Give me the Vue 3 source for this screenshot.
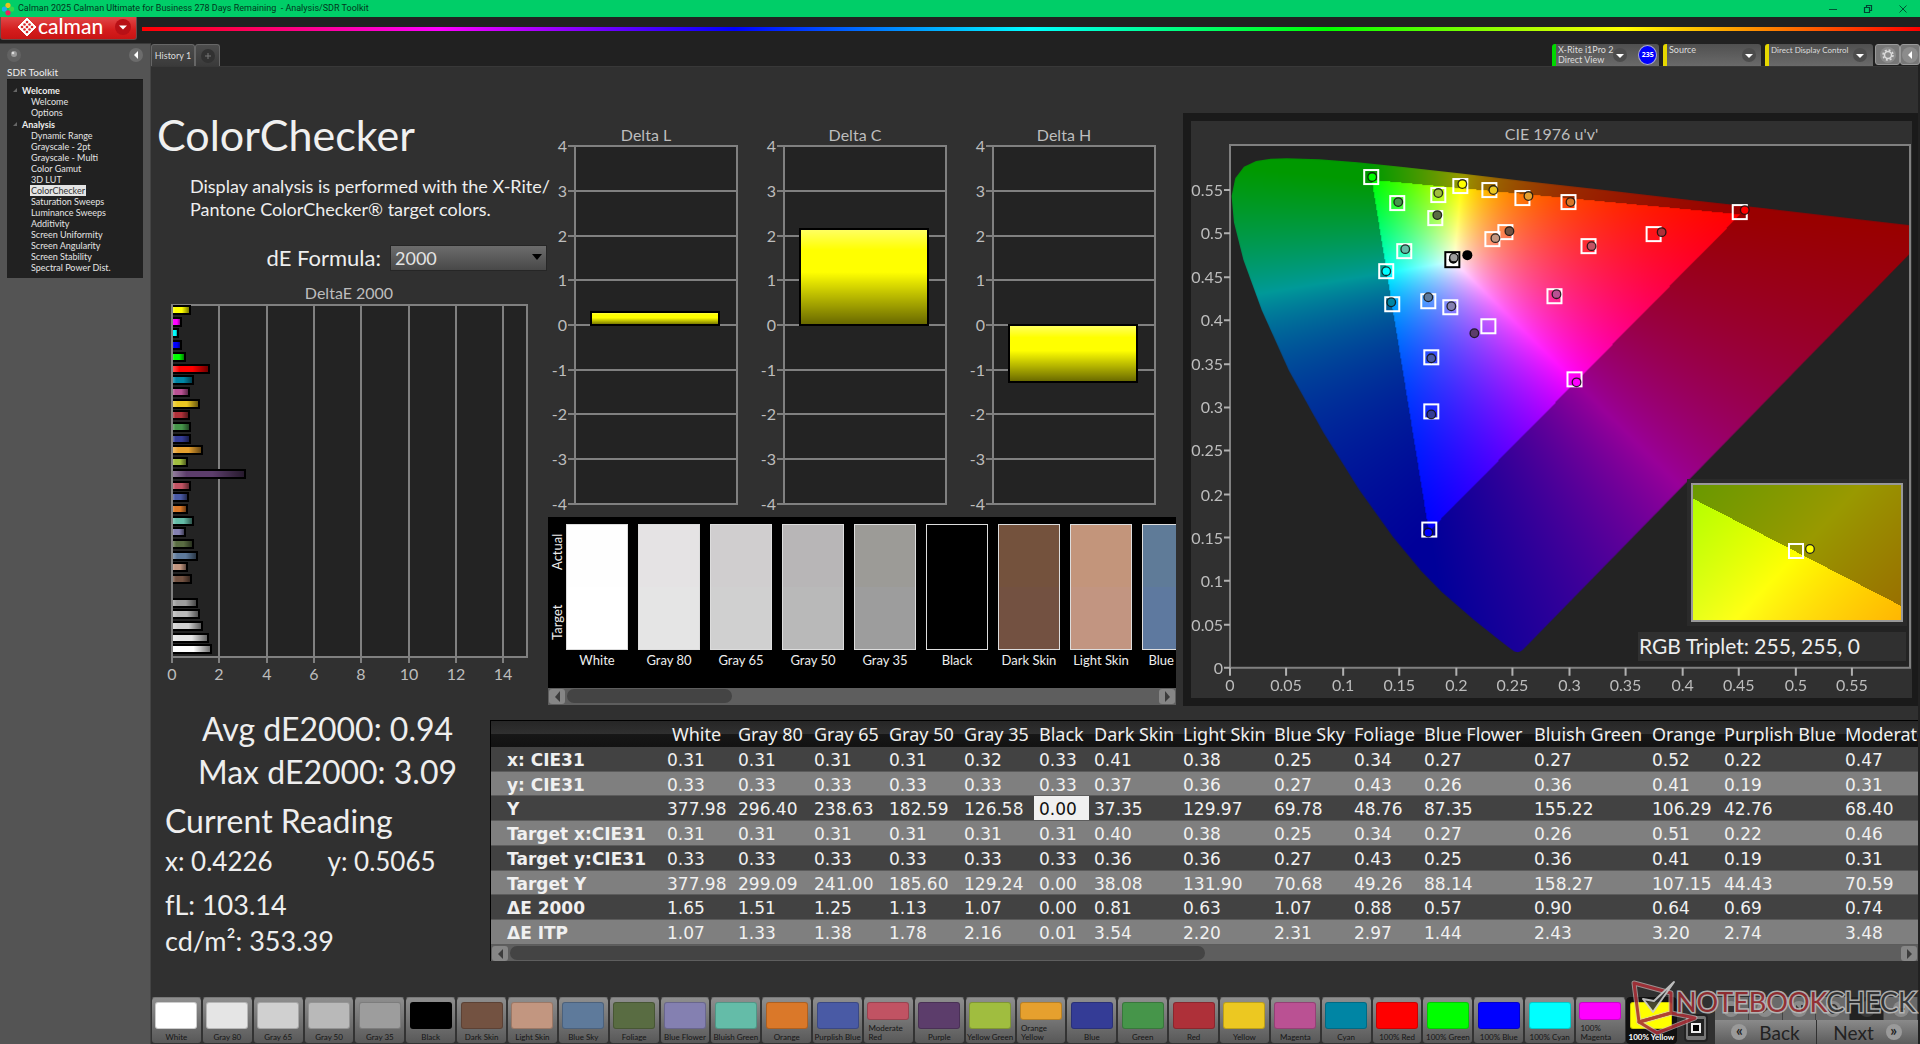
<script setup>
import { ref, onMounted } from 'vue'

const tree = [
  { name: 'Welcome', items: ['Welcome', 'Options'] },
  {
    name: 'Analysis',
    items: [
      'Dynamic Range', 'Grayscale - 2pt', 'Grayscale - Multi', 'Color Gamut', '3D LUT', 'ColorChecker',
      'Saturation Sweeps', 'Luminance Sweeps', 'Additivity', 'Screen Uniformity', 'Screen Angularity',
      'Screen Stability', 'Spectral Power Dist.'
    ]
  }
]
const activeItem = ref('ColorChecker')
const formula = ref('2000')

const patches = [
  { name: 'White', color: '#ffffff', de: 1.65 },
  { name: 'Gray 80', color: '#e5e5e5', de: 1.51 },
  { name: 'Gray 65', color: '#d0d0d0', de: 1.25 },
  { name: 'Gray 50', color: '#b9b9b9', de: 1.13 },
  { name: 'Gray 35', color: '#9d9d9d', de: 1.07 },
  { name: 'Black', color: '#000000', de: 0 },
  { name: 'Dark Skin', color: '#735241', de: 0.81 },
  { name: 'Light Skin', color: '#c29680', de: 0.63 },
  { name: 'Blue Sky', color: '#5e7a9b', de: 1.07 },
  { name: 'Foliage', color: '#596c42', de: 0.88 },
  { name: 'Blue Flower', color: '#8480b1', de: 0.57 },
  { name: 'Bluish Green', color: '#64bca8', de: 0.9 },
  { name: 'Orange', color: '#da7829', de: 0.64 },
  { name: 'Purplish Blue', color: '#495aa5', de: 0.69 },
  { name: 'Moderate Red', color: '#c15363', de: 0.74, two: true },
  { name: 'Purple', color: '#5c3d6b', de: 3.09 },
  { name: 'Yellow Green', color: '#a0bd3f', de: 0.65 },
  { name: 'Orange Yellow', color: '#e6a02e', de: 1.25, two: true },
  { name: 'Blue', color: '#343c96', de: 0.77 },
  { name: 'Green', color: '#46954a', de: 0.77 },
  { name: 'Red', color: '#ae3039', de: 0.7 },
  { name: 'Yellow', color: '#ecc821', de: 1.15 },
  { name: 'Magenta', color: '#ba5193', de: 0.7 },
  { name: 'Cyan', color: '#0085a4', de: 0.88 },
  { name: '100% Red', color: '#ff0000', de: 1.55 },
  { name: '100% Green', color: '#00ff00', de: 0.56 },
  { name: '100% Blue', color: '#0000ff', de: 0.37 },
  { name: '100% Cyan', color: '#00ffff', de: 0.27 },
  { name: '100% Magenta', color: '#ff00ff', de: 0.37, two: true },
  { name: '100% Yellow', color: '#ffff00', de: 0.75 }
]
const bars = [...patches].reverse().map((p, i) => ({
  ...p,
  y: Math.round(6 + i * 11.7),
  w: Math.round(p.de * 23.67)
}))
const deTicks = [0, 2, 4, 6, 8, 10, 12, 14]

const deltas = [
  { name: 'Delta L', value: 0.3 },
  { name: 'Delta C', value: 2.155 },
  { name: 'Delta H', value: -1.275 }
]
const deltaTicks = [4, 3, 2, 1, 0, -1, -2, -3, -4]
const deltaY = v => Math.round(200 - v * 44.7)

const strip = [
  { name: 'White', actual: '#fefefe', target: '#ffffff' },
  { name: 'Gray 80', actual: '#e5e3e4', target: '#e5e5e5' },
  { name: 'Gray 65', actual: '#d0cecf', target: '#d0d0d0' },
  { name: 'Gray 50', actual: '#b8b6b7', target: '#b9b9b9' },
  { name: 'Gray 35', actual: '#9c9b97', target: '#9d9d9d' },
  { name: 'Black', actual: '#000000', target: '#000000' },
  { name: 'Dark Skin', actual: '#74523d', target: '#735141' },
  { name: 'Light Skin', actual: '#c3957b', target: '#c29581' },
  { name: 'Blue Sky', actual: '#5f7b98', target: '#5e799f' }
]

const uTicks = ['0', '0.05', '0.1', '0.15', '0.2', '0.25', '0.3', '0.35', '0.4', '0.45', '0.5', '0.55']
const locus = [
  [0.2590, 0.0210], [0.2568, 0.0190], [0.2545, 0.0182], [0.2515, 0.0190], [0.2461, 0.0242], [0.2347, 0.0358],
  [0.2161, 0.0552], [0.1877, 0.0871], [0.1690, 0.1119], [0.1441, 0.151], [0.1147, 0.2044], [0.0828, 0.2708],
  [0.0521, 0.3427], [0.0282, 0.4117], [0.0119, 0.4698], [0.0035, 0.5131], [0.0014, 0.5432], [0.0046, 0.5638],
  [0.0123, 0.577], [0.0231, 0.5837], [0.036, 0.5861], [0.0501, 0.5868], [0.0792, 0.5856], [0.1127, 0.5821],
  [0.1531, 0.5766], [0.2026, 0.5694], [0.2623, 0.5604], [0.3315, 0.5501], [0.4035, 0.5393], [0.4692, 0.5296],
  [0.5202, 0.5218], [0.583, 0.5125], [0.6234, 0.5065]
]
// [target x, target y, measured x, measured y, fill]
const marks = [
  [141, 32, 142, 32, '#00ff00'], [167, 58, 168, 57, '#46954a'], [208, 50, 208, 48, '#a0bd3f'],
  [205, 73, 207, 70, '#596c42'], [230, 41, 232, 39, '#ffff00'], [259, 45, 263, 45, '#ecc821'],
  [292, 53, 298, 51, '#e6a02e'], [338, 57, 340, 57, '#da7829'], [509, 67, 514, 65, '#ff0000'],
  [423, 89, 431, 87, '#ae3039'], [358, 101, 361, 101, '#c15363'], [275, 87, 279, 86, '#735241'],
  [262, 94, 265, 93, '#c29680'], [174, 106, 175, 104, '#64bca8'], [156, 126, 156, 126, '#00ffff'],
  [162, 159, 161, 157, '#0085a4'], [198, 156, 198, 152, '#5e7a9b'], [220, 162, 221, 161, '#8480b1'],
  [258, 181, 244, 188, '#5c3d6b'], [324, 151, 326, 149, '#ba5193'], [201, 212, 201, 213, '#495aa5'],
  [201, 266, 201, 269, '#343c96'], [344, 234, 346, 237, '#ff00ff'], [199, 384, 198, 387, '#0000ff']
]

const columns = ['White', 'Gray 80', 'Gray 65', 'Gray 50', 'Gray 35', 'Black', 'Dark Skin', 'Light Skin', 'Blue Sky',
  'Foliage', 'Blue Flower', 'Bluish Green', 'Orange', 'Purplish Blue', 'Moderate Red']
const widths = [171, 71, 76, 75, 75, 75, 55, 89, 91, 80, 70, 110, 118, 72, 121, 130]
const rows = [
  ['x: CIE31', '0.31', '0.31', '0.31', '0.31', '0.32', '0.33', '0.41', '0.38', '0.25', '0.34', '0.27', '0.27', '0.52', '0.22', '0.47'],
  ['y: CIE31', '0.33', '0.33', '0.33', '0.33', '0.33', '0.33', '0.37', '0.36', '0.27', '0.43', '0.26', '0.36', '0.41', '0.19', '0.31'],
  ['Y', '377.98', '296.40', '238.63', '182.59', '126.58', '0.00', '37.35', '129.97', '69.78', '48.76', '87.35', '155.22', '106.29', '42.76', '68.40'],
  ['Target x:CIE31', '0.31', '0.31', '0.31', '0.31', '0.31', '0.31', '0.40', '0.38', '0.25', '0.34', '0.27', '0.26', '0.51', '0.22', '0.46'],
  ['Target y:CIE31', '0.33', '0.33', '0.33', '0.33', '0.33', '0.33', '0.36', '0.36', '0.27', '0.43', '0.25', '0.36', '0.41', '0.19', '0.31'],
  ['Target Y', '377.98', '299.09', '241.00', '185.60', '129.24', '0.00', '38.08', '131.90', '70.68', '49.26', '88.14', '158.27', '107.15', '44.43', '70.59'],
  ['ΔE 2000', '1.65', '1.51', '1.25', '1.13', '1.07', '0.00', '0.81', '0.63', '1.07', '0.88', '0.57', '0.90', '0.64', '0.69', '0.74'],
  ['ΔE ITP', '1.07', '1.33', '1.38', '1.78', '2.16', '0.01', '3.54', '2.20', '2.31', '2.97', '1.44', '2.43', '3.20', '2.74', '3.48']
]

const diagram = ref(null)
const inset = ref(null)

// Rec.709 colour of a chromaticity in linear light; out-of-gamut colours are clipped and dimmed
function shade(x, y) {
  const X = x / y
  const Z = (1 - x - y) / y
  const rgb = [
    3.2406 * X - 1.5372 - 0.4986 * Z,
    -0.9689 * X + 1.8758 + 0.0415 * Z,
    0.0557 * X - 0.204 + 1.057 * Z
  ]
  const dim = Math.min(...rgb) < -0.0005 ? 0.6 : 1
  const max = Math.max(...rgb)
  return rgb.map(c => Math.max(0, c) / max * 255 * dim)
}
function paint(canvas, toXy) {
  const ctx = canvas.getContext('2d')
  const img = ctx.createImageData(canvas.width, canvas.height)
  for (let j = 0; j < canvas.height; j++) {
    for (let i = 0; i < canvas.width; i++) {
      const [x, y] = toXy(i, j)
      const c = shade(x, Math.max(y, 0.0001))
      const k = (j * canvas.width + i) * 4
      img.data[k] = c[0]
      img.data[k + 1] = c[1]
      img.data[k + 2] = c[2]
      img.data[k + 3] = 255
    }
  }
  ctx.putImageData(img, 0, 0)
  return ctx
}
onMounted(() => {
  const ctx = paint(diagram.value, (i, j) => {
    const u = i / 1129
    const v = Math.max(0.002, (522 - j) / 867)
    const d = 6 * u - 16 * v + 12
    return [9 * u / d, 4 * v / d]
  })
  ctx.globalCompositeOperation = 'destination-in'
  ctx.beginPath()
  locus.forEach(([u, v]) => ctx.lineTo(u * 1129, 522 - v * 867))
  ctx.closePath()
  ctx.fill()
  paint(inset.value, (i, j) => [0.3943 + i / 208 * 0.05, 0.5303 - j / 135 * 0.05])
})
</script>

<template>
  <div class="app">
    <header class="titlebar">
      <svg class="app-icon" width="14" height="14" viewBox="0 0 14 14">
        <circle cx="7" cy="3.4" r="2.6" fill="#e8c41c" />
        <circle cx="3.4" cy="7" r="2.6" fill="#19b4e8" />
        <circle cx="10.6" cy="7" r="2.6" fill="#34d84a" />
        <circle cx="7" cy="10.8" r="2.6" fill="#ee1f5f" />
      </svg>
      <span class="caption">Calman 2025 Calman Ultimate for Business 278 Days Remaining&nbsp; - Analysis/SDR Toolkit</span>
      <div class="win-buttons">
        <button aria-label="Minimize"><svg width="10" height="10"><path d="M1 5.5H9" stroke="#053" fill="none" /></svg></button>
        <button aria-label="Restore"><svg width="10" height="10"><path d="M1.5 3.5h5v5h-5zM3.5 3V1.500h5v5H7" stroke="#043" stroke-width="1.200" fill="none" /></svg></button>
        <button aria-label="Close"><svg width="10" height="10"><path d="M1.500 1.500l7 7M8.500 1.500l-7 7" stroke="#053" fill="none" /></svg></button>
      </div>
    </header>

    <div class="brand-row">
      <button class="brand">
        <svg width="18" height="18" viewBox="0 0 18 18">
          <path d="M9 0 18 9 9 18 0 9z" fill="#fff" stroke="#fff" stroke-linejoin="round" />
          <g fill="#d82a2a">
            <circle cx="9" cy="4" r="1.300" /><circle cx="6.500" cy="6.500" r="1.300" /><circle cx="11.500" cy="6.500" r="1.300" />
            <circle cx="4" cy="9" r="1.300" /><circle cx="9" cy="9" r="1.300" /><circle cx="14" cy="9" r="1.300" />
            <circle cx="6.500" cy="11.500" r="1.300" /><circle cx="11.500" cy="11.500" r="1.300" /><circle cx="9" cy="14" r="1.300" />
          </g>
        </svg>
        <span>calman</span>
        <svg class="brand-arrow" width="16" height="16"><circle cx="8" cy="8" r="8" fill="#b81016" /><path d="M4 6.500h8l-4 4z" fill="#fff" /></svg>
      </button>
      <div class="rainbow"></div>
    </div>

    <div class="body">
      <aside class="sidebar">
        <div class="side-tools">
          <button aria-label="Record"><svg width="16" height="16"><circle cx="8" cy="8" r="7" fill="#626262" /><circle cx="8" cy="7" r="3" fill="#9a9a9a" /><circle cx="7" cy="6" r="1.300" fill="#ddd" /></svg></button>
          <button aria-label="Collapse"><svg width="16" height="16"><circle cx="8" cy="8" r="7" fill="#6c6c6c" /><path d="M10 4v8L6 8z" fill="#fff" /></svg></button>
        </div>
        <div class="side-title">SDR Toolkit</div>
        <nav class="tree">
          <template v-for="g in tree" :key="g.name">
            <div class="group"><svg width="5" height="5"><path d="M4 0v4H0z" fill="#666" /></svg>{{ g.name }}</div>
            <a v-for="i in g.items" :key="i" href="#" :class="{ on: i === activeItem && g.name === 'Analysis' }" @click.prevent="activeItem = i">{{ i }}</a>
          </template>
        </nav>
      </aside>

      <main class="main">
        <div class="tabbar">
          <button class="tab">History 1</button>
          <button class="tab add" aria-label="Add"><svg width="16" height="16"><circle cx="8" cy="8" r="7" fill="#323232" /><path d="M8 5v6M5 8h6" stroke="#777" /></svg></button>
          <div class="devices">
            <div class="device meter">
              <div class="names">X-Rite i1Pro 2<br>Direct View</div>
              <button aria-label="Meter options"><svg width="14" height="14"><circle cx="7" cy="7" r="7" fill="#4c4c4c" /><path d="M3 6h8l-4 4z" fill="#fff" /></svg></button>
              <div class="level">235</div>
            </div>
            <div class="device source">
              <div class="names">Source</div>
              <button aria-label="Source options"><svg width="14" height="14"><circle cx="7" cy="7" r="7" fill="#4c4c4c" /><path d="M3 6h8l-4 4z" fill="#fff" /></svg></button>
            </div>
            <div class="device display">
              <div class="names">Direct Display Control</div>
              <button aria-label="Display options"><svg width="14" height="14"><circle cx="7" cy="7" r="7" fill="#4c4c4c" /><path d="M3 6h8l-4 4z" fill="#fff" /></svg></button>
            </div>
            <button class="square" aria-label="Settings">
              <svg width="16" height="16"><circle cx="8" cy="8" r="8" fill="#8c8c8c" /><circle cx="8" cy="8" r="3.500" fill="none" stroke="#ddd" stroke-width="1.500" /><circle cx="8" cy="8" r="5" fill="none" stroke="#ddd" stroke-width="1.500" stroke-dasharray="2 1.930" /></svg>
            </button>
            <button class="square last" aria-label="Hide"><svg width="16" height="16"><circle cx="8" cy="8" r="8" fill="#8c8c8c" /><path d="M10 4v8L6 8z" fill="#fff" /></svg></button>
          </div>
        </div>

        <div class="workspace">
          <section class="upper">
            <div class="left">
              <h1>ColorChecker</h1>
              <p class="desc">Display analysis is performed with the X-Rite/<br>Pantone ColorChecker® target colors.</p>
              <div class="formula">
                <label for="formula">dE Formula:</label>
                <div class="select">
                  <select id="formula" v-model="formula"><option>2000</option></select>
                  <svg width="10" height="7"><path d="M0 0h10L5 6z" fill="#000" /></svg>
                </div>
              </div>
              <svg class="de-chart" width="390" height="406" viewBox="151 284 390 406">
                <defs>
                  <linearGradient id="gx"><stop offset="0" stop-color="#fff" stop-opacity=".35" /><stop offset=".2" stop-color="#fff" stop-opacity="0" /><stop offset=".55" stop-color="#000" stop-opacity="0" /><stop offset="1" stop-color="#000" stop-opacity=".6" /></linearGradient>
                </defs>
                <text x="349" y="300" text-anchor="middle">DeltaE 2000</text>
                <rect x="172" y="306" width="355" height="352" fill="#232323" stroke="#808080" stroke-width="2" />
                <g v-for="(t, i) in deTicks" :key="t">
                  <path :d="`M${172 + Math.round(i * 47.3)} 306V664`" stroke="#808080" stroke-width="2" />
                  <text :x="172 + Math.round(i * 47.3)" y="681" text-anchor="middle">{{ t }}</text>
                </g>
                <g v-for="b in bars.filter(b => b.w)" :key="b.name">
                  <rect x="172" :y="301 + b.y" :width="b.w" height="8" :fill="b.color" />
                  <rect x="172" :y="301 + b.y" :width="b.w" height="8" fill="url(#gx)" />
                  <path :d="`M172 ${301 + b.y}h${b.w}v8h-${b.w}`" fill="none" stroke="#000" stroke-width="2" />
                </g>
                <path d="M172 306V658" stroke="#808080" stroke-width="2" />
              </svg>
            </div>

            <div class="center">
              <div class="deltas">
                <svg v-for="d in deltas" :key="d.name" width="209" height="396" viewBox="0 0 209 396">
                  <defs>
                    <linearGradient id="gy" x2="0" y2="1"><stop offset="0" stop-color="#fff" stop-opacity=".4" /><stop offset=".22" stop-color="#fff" stop-opacity="0" /><stop offset=".45" stop-color="#000" stop-opacity="0" /><stop offset="1" stop-color="#000" stop-opacity=".6" /></linearGradient>
                  </defs>
                  <text x="105" y="16" text-anchor="middle">{{ d.name }}</text>
                  <rect x="34" y="21" width="162" height="358" fill="#232323" stroke="#808080" stroke-width="2" />
                  <g v-for="t in deltaTicks" :key="t">
                    <path :d="`M27 ${deltaY(t)}H196`" stroke="#808080" stroke-width="2" />
                    <text x="26" :y="deltaY(t) + 6" text-anchor="end">{{ t }}</text>
                  </g>
                  <rect x="50" :y="Math.min(200, deltaY(d.value))" width="128" :height="Math.abs(deltaY(d.value) - 200)" fill="#ffff00" />
                  <rect x="50" :y="Math.min(200, deltaY(d.value))" width="128" :height="Math.abs(deltaY(d.value) - 200)" fill="url(#gy)" stroke="#000" stroke-width="2" />
                </svg>
              </div>

              <div class="strip">
                <div class="strip-view">
                  <div class="side-labels"><span>Actual</span><span>Target</span></div>
                  <div v-for="s in strip" :key="s.name" class="swatch">
                    <div class="chip"><div :style="{ background: s.actual }"></div><div :style="{ background: s.target }"></div></div>
                    <span>{{ s.name }}</span>
                  </div>
                </div>
                <div class="scrollbar">
                  <button aria-label="Scroll left"><svg width="7" height="12"><path d="M6 0v11L1 6z" fill="#3c3c3c" /></svg></button>
                  <div class="track"><div class="thumb short"></div></div>
                  <button aria-label="Scroll right"><svg width="7" height="12"><path d="M1 0v11l5-5z" fill="#3c3c3c" /></svg></button>
                </div>
              </div>
            </div>

            <div class="cie">
              <div class="cie-title">CIE 1976 u'v'</div>
              <div class="plot">
                <canvas ref="diagram" width="680" height="522"></canvas>
                <svg class="overlay" viewBox="0 0 680 522">
                  <rect x="0" y="0" width="679" height="522" fill="none" stroke="#808080" stroke-width="2" />
                  <g v-for="(t, i) in uTicks" :key="t">
                    <path :d="`M${Math.round(i * 56.45)} 522v8M-6 ${522 - Math.round(i * 43.35)}h6`" stroke="#b0b0b0" stroke-width="2" />
                    <text :x="Math.round(i * 56.45)" y="545" text-anchor="middle">{{ t }}</text>
                    <text x="-7" :y="528 - Math.round(i * 43.35)" text-anchor="end">{{ t }}</text>
                  </g>
                  <g fill="none" stroke="#fff" stroke-width="2">
                    <rect v-for="(m, i) in marks" :key="i" :x="m[0] - 7" :y="m[1] - 7" width="14" height="14" />
                  </g>
                  <rect x="215" y="107" width="14" height="15" fill="#fff" stroke="#000" stroke-width="2" />
                  <circle cx="223" cy="114" r="4.500" fill="#000" />
                  <circle cx="223.500" cy="112.500" r="4.200" fill="#9d9d9d" stroke="#111" stroke-width="1.300" />
                  <circle cx="237" cy="110" r="5" fill="#000" />
                  <circle v-for="(m, i) in marks" :key="'c' + i" :cx="m[2]" :cy="m[3]" r="4.300" :fill="m[4]" stroke="#111" stroke-opacity=".85" stroke-width="1.300" />
                </svg>
                <div class="corner">
                  <div class="inset">
                    <canvas ref="inset" width="208" height="135"></canvas>
                    <svg viewBox="0 0 208 135">
                      <rect x="96" y="59" width="14" height="14" fill="none" stroke="#fff" stroke-width="2" />
                      <circle cx="117" cy="64" r="4.300" fill="#ffff00" stroke="#222" stroke-width="1.300" />
                    </svg>
                  </div>
                  <div class="triplet">RGB Triplet: 255, 255, 0</div>
                </div>
              </div>
            </div>
          </section>

          <section class="lower">
            <div class="stats">
              <div class="big">Avg dE2000: 0.94</div>
              <div class="big">Max dE2000: 3.09</div>
              <div class="reading">Current Reading</div>
              <div class="pair"><span>x: 0.4226</span><span>y: 0.5065</span></div>
              <div class="line">fL: 103.14</div>
              <div class="line">cd/m²: 353.39</div>
            </div>
            <div class="grid">
              <div class="grid-view">
                <table>
                  <colgroup><col v-for="(w, i) in widths" :key="i" :style="{ width: w + 'px' }"></colgroup>
                  <thead><tr><th></th><th v-for="c in columns" :key="c" scope="col">{{ c }}</th></tr></thead>
                  <tbody>
                    <tr v-for="(r, ri) in rows" :key="r[0]">
                      <th scope="row">{{ r[0] }}</th>
                      <td v-for="(v, ci) in r.slice(1)" :key="ci" :class="{ picked: ri === 2 && ci === 5 }">{{ v }}</td>
                    </tr>
                  </tbody>
                </table>
              </div>
              <div class="scrollbar">
                <button aria-label="Scroll left"><svg width="7" height="12"><path d="M6 1v10L1 6z" fill="#3c3c3c" /></svg></button>
                <div class="track"><div class="thumb long"></div></div>
                <button aria-label="Scroll right"><svg width="7" height="12"><path d="M1 1v10l5-5z" fill="#3c3c3c" /></svg></button>
              </div>
            </div>
          </section>
        </div>

        <footer class="footer">
          <div class="patches">
            <button v-for="p in patches" :key="p.name" class="patch" :class="{ two: p.two, shown: p.name === '100% Yellow' }">
              <span class="block" :style="{ background: p.color }"></span>
              <span class="name">{{ p.name }}</span>
            </button>
          </div>
          <button class="pattern" aria-label="Pattern window"><svg width="24" height="28"><rect x="1" y="1" width="22" height="26" rx="3" fill="#777" stroke="#222" stroke-width="2" /><rect x="6" y="7" width="12" height="13" fill="#000" stroke="#222" stroke-width="4" /><rect x="8" y="10" width="8" height="8" fill="#000" stroke="#eee" stroke-width="2" /></svg></button>
          <div class="controls">
            <div class="transport">
              <button aria-label="Stop"><svg width="16" height="16"><circle cx="8" cy="8" r="8" fill="#8a8a8a" /><path d="M5 5h6v6H5z" fill="#333" /></svg></button>
              <button aria-label="Play"><svg width="16" height="16"><circle cx="8" cy="8" r="8" fill="#8a8a8a" /><path d="M6 4v8l5-4z" fill="#333" /></svg></button>
              <button aria-label="Step"><svg width="16" height="16"><circle cx="8" cy="8" r="8" fill="#8a8a8a" /><path d="M5 4v8l4-4zM10 4h2v8h-2z" fill="#333" /></svg></button>
              <button aria-label="Loop"><svg width="16" height="16"><circle cx="8" cy="8" r="8" fill="#8a8a8a" /><circle cx="8" cy="8" r="4" fill="none" stroke="#333" stroke-width="2" /></svg></button>
              <button class="dark" aria-label="Refresh"><svg width="16" height="16"><circle cx="8" cy="8" r="8" fill="#3a3a3a" /></svg></button>
              <button aria-label="More"><svg width="16" height="16"><circle cx="8" cy="8" r="8" fill="#8a8a8a" /><path d="M4 7h8v2H4z" fill="#333" /></svg></button>
            </div>
            <div class="nav">
              <button><i>«</i>Back</button>
              <button>Next<i>»</i></button>
            </div>
          </div>
          <div class="watermark">
            <svg width="72" height="58" viewBox="0 0 72 58" fill="none" stroke-linejoin="round">
              <g stroke="#d8c8c8" stroke-width="5" opacity=".7">
                <path d="M5 4 42 14V34L10 43z" /><path d="M10 43 42 34 66 39 28 54z" />
              </g>
              <g stroke="#a83038" stroke-width="3">
                <path d="M5 4 42 14V34L10 43z" /><path d="M10 43 42 34 66 39 28 54z" />
              </g>
              <path d="M14 20l10 13L45 3 25 22z" fill="#333" stroke="#ccc" stroke-width="2" />
            </svg>
            <span><b>NOTEBOOK</b>CHECK</span>
          </div>
        </footer>
      </main>
    </div>
  </div>
</template>

<style>
body { margin: 0; background: #303030; }
</style>

<style scoped>
.app {
  display: flex; flex-direction: column; min-height: 100vh; overflow: hidden;
  font-family: Lato, "Open Sans", sans-serif; color: #eee; background: #212121;
}
.app * { box-sizing: border-box; }
button { font: inherit; color: inherit; border: 0; padding: 0; margin: 0; background: none; display: flex; align-items: center; justify-content: center; }
svg { display: block; flex: none; }
svg text { font-size: 16px; fill: #bdbdbd; }

.titlebar { display: flex; align-items: center; height: 17px; background: #00ce68; color: #03361d; font: 9px/17px Roboto, sans-serif; }
.app-icon { margin: 0 3px 0 1px; }
.caption { flex: 1; white-space: nowrap; }
.win-buttons { display: flex; }
.win-buttons button { width: 35px; height: 17px; }

.brand-row { display: flex; height: 26px; }
.brand { width: 137px; height: 23px; padding: 0 5px 2px 17px; gap: 2px; justify-content: flex-start; background: linear-gradient(#e04848, #d41c1c 60%, #c81414); border: 1px solid #6a4a4a; border-top: 0; border-radius: 0 0 3px 3px; }
.brand span { font: 500 21px/20px Lato, sans-serif; color: #fff; height: 23px; }
.brand-arrow { margin-left: auto; }
.rainbow { flex: 1; height: 4px; margin: 10px 0 0 5px; background: linear-gradient(90deg, #f00, #f0f, #00f, #0ff, #0f0, #ff0, #f00); }

.body { display: flex; flex: 1; }
.sidebar { width: 151px; padding: 0 7px; background: #545454; border-right: 1px solid #444; border-top: 1px solid #3a3a3a; }
.side-tools { display: flex; justify-content: space-between; margin: 2px -1px 0; height: 17px; }
.side-title { margin-top: 4px; font-size: 10px; line-height: 11px; height: 12px; }
.tree { display: flex; flex-direction: column; align-items: flex-start; padding: 4px 0 4px; height: 199px; background: #212121; font-size: 9px; line-height: 11px; border-top: 1px solid #1a1a1a; }
.group { display: flex; align-items: center; gap: 4px; padding-left: 6px; font-weight: bold; height: 12px; }
.tree a { color: #e4e4e4; text-decoration: none; margin-left: 23px; padding: 0 1px; height: 11px; }
.tree a.on { background: #e4e4e4; color: #333; }

.main { flex: 1; min-width: 0; display: flex; flex-direction: column; }
.tabbar { display: flex; height: 23px; padding-top: 1px; }
.tab { width: 44px; background: linear-gradient(#4c4c4c, #3a3a3a); border: 1px solid #666; border-bottom: 0; border-radius: 3px 3px 0 0; font-size: 9px; color: #ddd; }
.tab.add { width: 25px; }
.devices { display: flex; margin-left: auto; font-size: 9px; line-height: 10px; gap: 4px; }
.device { display: flex; align-items: flex-start; height: 22px; padding-left: 2px; border-left: 4px solid #e6d800; background: linear-gradient(#505050, #6a6a6a); border-radius: 3px 3px 0 0; color: #ddd; }
.device .names { flex: 1; white-space: nowrap; padding-top: 1px; }
.device button { margin: 4px 5px 0 0; }
.meter { width: 107px; border-color: #00d800; }
.meter button { margin-right: 7px; }
.source { width: 98px; }
.display { width: 108px; font-size: 8px; }
.display .names { width: 82px; flex: none; }
.level { width: 20px; height: 20px; margin: 1px 2px 0 4px; border-radius: 50%; border: 1px solid #aac; background: #00f; color: #fff; font: bold 7px/18px "Open Sans", sans-serif; text-align: center; }
.square { width: 25px; height: 21px; margin-left: -2px; background: #777; border: 1px solid #999; border-radius: 3px; }
.square.last { width: 20px; margin-left: -4px; }

.workspace { flex: 1; background: #303030; border-top: 1px solid #383838; margin-right: 2px; }
.upper { display: flex; height: 640px; }
.left { width: 390px; flex: none; }
h1 { margin: 43px 0 0 6px; font-size: 43px; line-height: 50px; font-weight: normal; color: #f0f0f0; }
.desc { margin: 15px 0 0 39px; font-size: 18px; line-height: 23px; white-space: nowrap; }
.formula { display: flex; align-items: center; justify-content: flex-end; gap: 9px; margin: 23px -6px 13px 0; height: 26px; font-size: 22px; }
.select { position: relative; width: 157px; }
.select select { width: 100%; height: 26px; padding: 0 4px; appearance: none; border: 1px solid #262626; border-radius: 0; background: linear-gradient(#6c6c6c, #484848); color: #e4e4e4; font: 18px/24px Lato, sans-serif; }
.select svg { position: absolute; right: 5px; top: 11px; }
.center { width: 642px; flex: none; }
.deltas { display: flex; margin-top: 58px; }
.strip { width: 628px; margin: -4px 0 0 7px; }
.strip-view { position: relative; display: flex; gap: 10px; height: 171px; padding: 7px 0 0 18px; background: #000; overflow: hidden; }
.side-labels { position: absolute; left: 0; top: 13px; width: 18px; height: 114px; display: flex; flex-direction: column; justify-content: space-between; font-size: 13px; }
.side-labels span { writing-mode: vertical-rl; transform: rotate(180deg); line-height: 18px; text-align: center; height: 44px; }
.swatch { width: 62px; flex: none; text-align: center; font-size: 13px; line-height: 20px; white-space: nowrap; }
.chip { height: 126px; border: 1px solid #ddd; display: flex; flex-direction: column; }
.chip div { flex: 1; }
.scrollbar { display: flex; gap: 2px; height: 17px; padding: 1px; background: #5e5e5e; }
.scrollbar button { width: 16px; height: 15px; background: #868686; border-radius: 3px; }
.track { flex: 1; }
.thumb { height: 14px; border-radius: 7px; background: #444; }
.thumb.short { width: 28%; }
.thumb.long { width: 50%; }

.cie { flex: 1; min-width: 0; height: 593px; margin-top: 46px; border: 8px solid #1a1a1a; background: #303030; padding: 0 1px 0 39px; border-right-width: 6px; }
.cie-title { height: 24px; line-height: 26px; font-size: 16px; color: #bdbdbd; text-align: center; padding-right: 38px; }
.plot { position: relative; background: #232323; }
.plot canvas { display: block; width: 100%; }
.overlay { position: absolute; inset: 0; width: 100%; overflow: visible; }
.corner { position: absolute; right: 5px; bottom: 7px; display: flex; flex-direction: column; align-items: flex-end; }
.inset { position: relative; width: 212px; height: 139px; margin: 0 3px 10px 0; border: 2px solid #999; outline: 4px solid #2a2a2a; }
.inset svg { position: absolute; inset: 0; }
.triplet { width: 268px; height: 29px; padding-left: 1px; background: #303030; font-size: 21px; line-height: 28px; white-space: nowrap; }

.lower { display: flex; }
.stats { width: 339px; flex: none; padding-left: 14px; }
.big { font-size: 32px; line-height: 43px; text-align: center; }
.reading { font-size: 32px; line-height: 40px; margin-top: 8px; }
.pair { display: flex; font-size: 26px; line-height: 40px; margin-bottom: 6px; }
.pair span { width: 167px; }
.line { font-size: 27px; line-height: 36px; }
.grid { flex: 1; min-width: 0; margin-top: 13px; border-top: 1px solid #000; border-left: 1px solid #000; }
.grid-view { overflow: hidden; }
table { table-layout: fixed; width: 1473px; height: 224px; border-collapse: collapse; }
thead tr { height: 26px; background: linear-gradient(#262626, #303030 50%, #161616 52%, #121212); }
th, td { padding: 2px 0 0 5px; text-align: left; white-space: nowrap; font: 17px/20px "DejaVu Sans", sans-serif; color: #f0f0f0; }
thead th { padding-top: 0; font: 18px/20px "Noto Sans", sans-serif; }
thead th:nth-child(2) { padding-left: 10px; }
tbody tr { background: #424242; border-bottom: 1px solid #5c5c5c; }
tbody tr:nth-child(even) { background: #7f7f7f; }
tbody th { padding-left: 16px; font: bold 17px/20px "DejaVu Sans", sans-serif; }
td.picked { background: #f0f0f0; color: #111; }
.grid .scrollbar { height: 16px; }

.footer { position: relative; display: flex; height: 47px; margin-right: 2px; background: #303030; }
.patches { display: flex; width: 1526px; }
.patch { flex: 1 1 0; min-width: 0; flex-direction: column; justify-content: flex-start; padding-top: 4px; background: linear-gradient(#8e8e8e, #747474 50%, #585858); border: 1px solid #333; border-top-color: #777; border-radius: 4px; }
.patch .block { flex: none; width: 42px; height: 27px; border-radius: 3px; border: 1px solid #0003; }
.patch .name { font-size: 8px; line-height: 16px; color: #161616; white-space: nowrap; }
.patch.two .block { height: 18px; }
.patch.two .name { width: 40px; line-height: 9px; margin-top: 4px; text-align: left; white-space: normal; }
.patch.shown { background: #111; border-color: #111; }
.patch.shown .name { color: #fff; font-weight: bold; }
.pattern { width: 38px; padding-top: 14px; background: #303030; }
.controls { flex: 1; }
.transport { display: flex; height: 23px; }
.transport button { flex: 1; background: #6a6a6a; border-right: 1px solid #444; }
.transport .dark { background: #222; }
.nav { display: flex; gap: 1px; }
.nav button { flex: 1; height: 24px; gap: 12px; background: linear-gradient(#8a8a8a, #5c5c5c); color: #222; font-size: 19px; }
.nav i { width: 16px; height: 16px; border-radius: 8px; background: #9a9a9a; font: bold 15px/13px Lato, sans-serif; text-align: center; }
.watermark { position: absolute; right: 2px; top: -18px; display: flex; pointer-events: none; opacity: .9; }
.watermark span { margin: 7px 0 0 -25px; font-size: 27px; line-height: 32px; color: #333; -webkit-text-stroke: 3px #bbb; paint-order: stroke fill; }
.watermark b { font-weight: normal; color: #982c30; }
</style>
